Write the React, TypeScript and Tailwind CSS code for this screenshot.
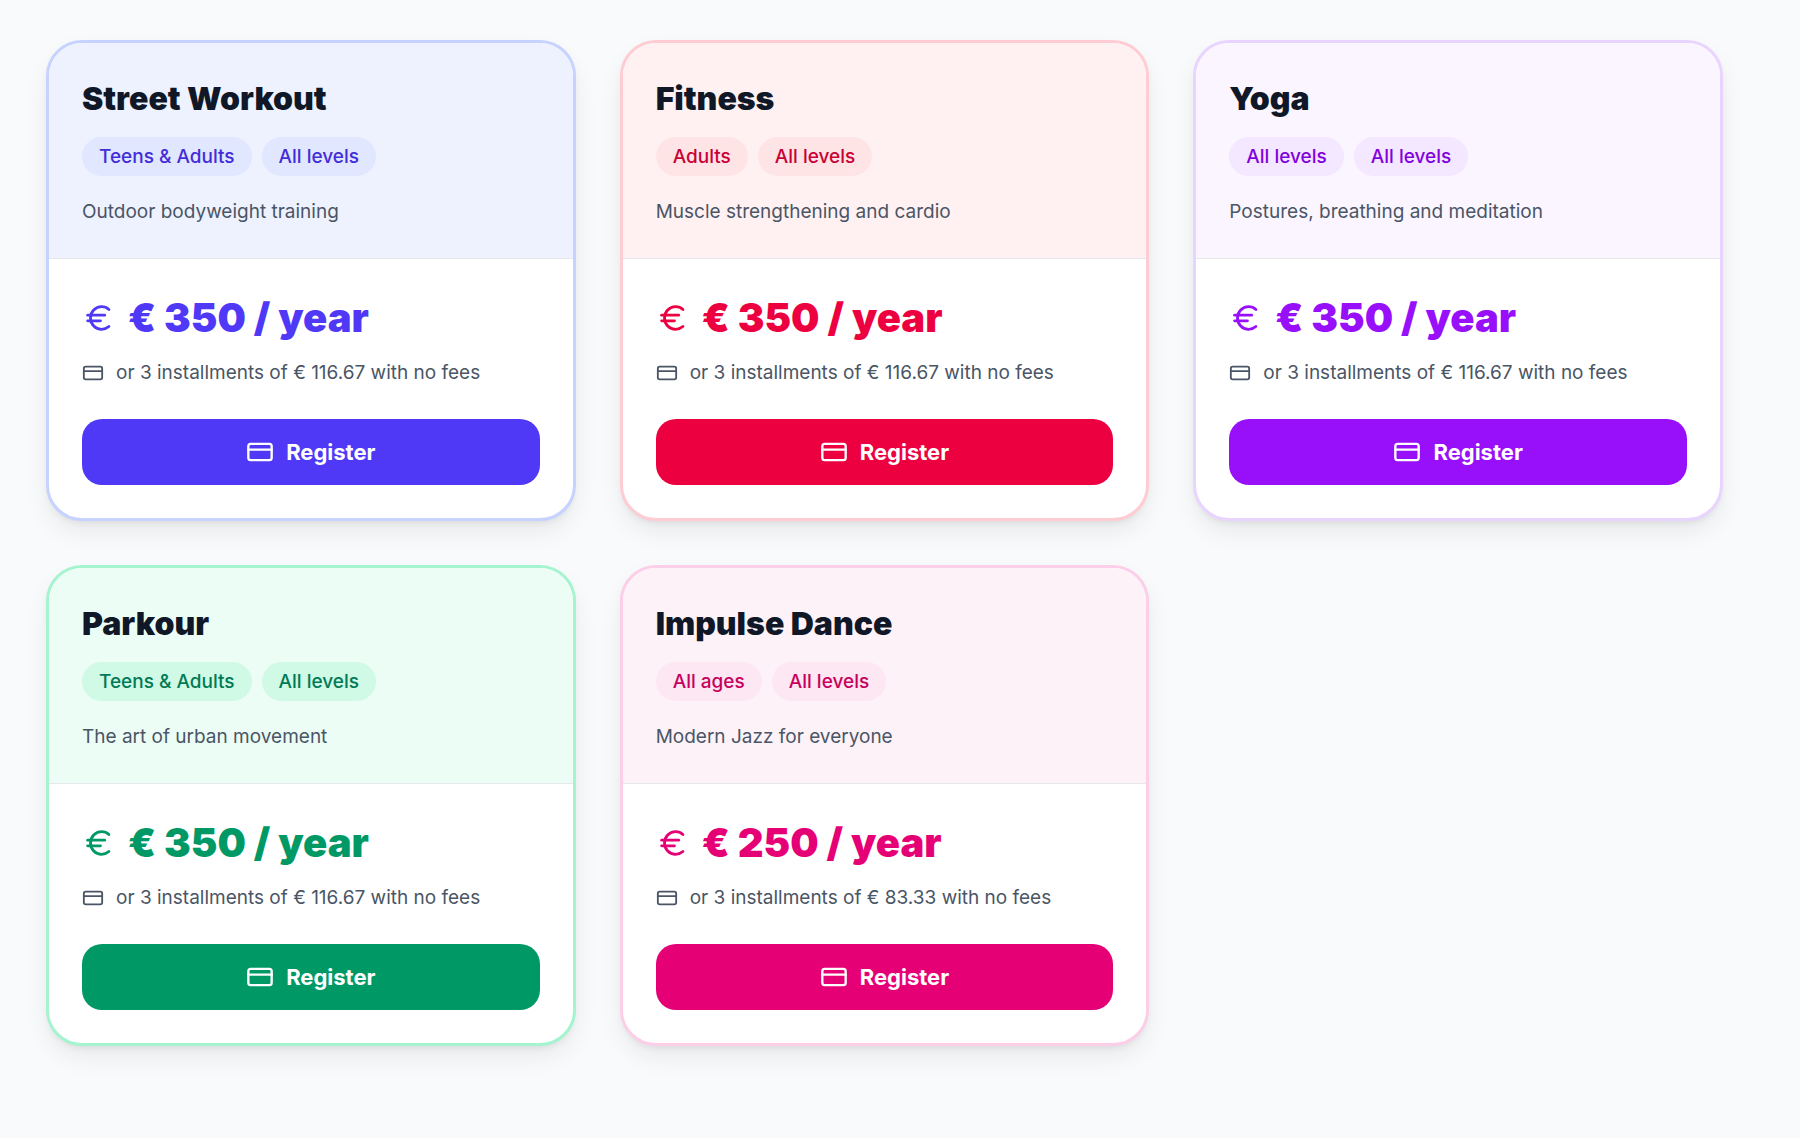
import clsx from "clsx";
import { CreditCard, Euro } from "lucide-react";

interface Course {
  name: string;
  tags: string[];
  description: string;
  price: string;
  installment: string;
  theme: Theme;
}

interface Theme {
  border: string;
  header: string;
  tag: string;
  price: string;
  button: string;
}

const indigo: Theme = {
  border: "border-indigo-200",
  header: "bg-indigo-50",
  tag: "bg-indigo-100 text-indigo-700",
  price: "text-indigo-600",
  button: "bg-indigo-600 hover:bg-indigo-700",
};

const rose: Theme = {
  border: "border-rose-200",
  header: "bg-rose-50",
  tag: "bg-rose-100 text-rose-700",
  price: "text-rose-600",
  button: "bg-rose-600 hover:bg-rose-700",
};

const purple: Theme = {
  border: "border-purple-200",
  header: "bg-purple-50",
  tag: "bg-purple-100 text-purple-700",
  price: "text-purple-600",
  button: "bg-purple-600 hover:bg-purple-700",
};

const emerald: Theme = {
  border: "border-emerald-200",
  header: "bg-emerald-50",
  tag: "bg-emerald-100 text-emerald-700",
  price: "text-emerald-600",
  button: "bg-emerald-600 hover:bg-emerald-700",
};

const pink: Theme = {
  border: "border-pink-200",
  header: "bg-pink-50",
  tag: "bg-pink-100 text-pink-700",
  price: "text-pink-600",
  button: "bg-pink-600 hover:bg-pink-700",
};

const courses: Course[] = [
  {
    name: "Street Workout",
    tags: ["Teens & Adults", "All levels"],
    description: "Outdoor bodyweight training",
    price: "€ 350",
    installment: "€ 116.67",
    theme: indigo,
  },
  {
    name: "Fitness",
    tags: ["Adults", "All levels"],
    description: "Muscle strengthening and cardio",
    price: "€ 350",
    installment: "€ 116.67",
    theme: rose,
  },
  {
    name: "Yoga",
    tags: ["All levels", "All levels"],
    description: "Postures, breathing and meditation",
    price: "€ 350",
    installment: "€ 116.67",
    theme: purple,
  },
  {
    name: "Parkour",
    tags: ["Teens & Adults", "All levels"],
    description: "The art of urban movement",
    price: "€ 350",
    installment: "€ 116.67",
    theme: emerald,
  },
  {
    name: "Impulse Dance",
    tags: ["All ages", "All levels"],
    description: "Modern Jazz for everyone",
    price: "€ 250",
    installment: "€ 83.33",
    theme: pink,
  },
];

const CourseCard = ({ course }: { course: Course }) => {
  const { theme } = course;

  return (
    <article
      className={clsx(
        "overflow-hidden rounded-[36px] border-3 bg-white shadow-[0_12px_26px_-3px_rgb(0_0_0/0.08),0_4px_8px_-4px_rgb(0_0_0/0.1)]",
        theme.border
      )}
    >
      <div
        className={clsx(
          "border-b border-gray-200 px-[33px] pt-9 pb-[30px]",
          theme.header
        )}
      >
        <h2 className="text-[32px] leading-10 font-black text-gray-900">
          {course.name}
        </h2>

        <ul className="mt-[18px] flex flex-wrap gap-2.5">
          {course.tags.map((tag, index) => (
            <li
              key={index}
              className={clsx(
                "rounded-full px-[17px] py-2 text-[19px] leading-[23px] font-medium",
                theme.tag
              )}
            >
              {tag}
            </li>
          ))}
        </ul>

        <p className="mt-5 text-[19px] leading-8 text-gray-600">
          {course.description}
        </p>
      </div>

      <div className="px-[33px] pt-8 pb-[33px]">
        <div className={clsx("flex items-center gap-3", theme.price)}>
          <Euro size={34} />

          <p className="text-[40px] leading-[54px] font-black">
            {course.price} / year
          </p>
        </div>

        <p className="mt-[14px] flex items-center gap-3 text-[19px] leading-7 text-gray-600">
          <CreditCard size={22} />
          or 3 installments of {course.installment} with no fees
        </p>

        <button
          type="button"
          className={clsx(
            "mt-8 flex h-[66px] w-full items-center justify-center gap-3 rounded-[20px] text-[22px] font-bold text-white",
            theme.button
          )}
        >
          <CreditCard size={28} />
          Register
        </button>
      </div>
    </article>
  );
};

export default function App() {
  return (
    <main className="min-h-screen bg-gray-50 pt-10 pr-[77px] pb-10 pl-[46px] font-[Inter,sans-serif]">
      <div className="grid grid-cols-3 gap-11">
        {courses.map((course) => (
          <CourseCard key={course.name} course={course} />
        ))}
      </div>
    </main>
  );
}
